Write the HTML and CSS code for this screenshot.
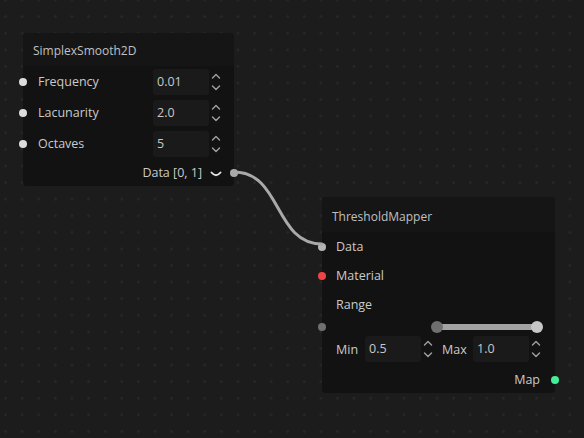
FILE: index.html
```html
<!DOCTYPE html>
<html>
<head>
<meta charset="utf-8">
<link rel="stylesheet" href="styles.css">
</head>
<body>
<div class="canvas">
  <svg class="wires" width="584" height="438" viewBox="0 0 584 438">
    <path d="M234 172 C 282 172, 274 244, 322 244" fill="none" stroke="#a9a9a9" stroke-width="3" stroke-linecap="round"/>
  </svg>

  <div class="node node-simplex">
    <div class="node-header">SimplexSmooth2D</div>
    <div class="row">
      <span class="port port-in port-white"></span>
      <span class="label">Frequency</span>
      <span class="numbox">0.01</span>
      <span class="spin"><svg width="10" height="22" viewBox="0 0 10 22"><path d="M1.5 7 L5 3.5 L8.5 7" /><path d="M1.5 15 L5 18.5 L8.5 15" /></svg></span>
    </div>
    <div class="row">
      <span class="port port-in port-white"></span>
      <span class="label">Lacunarity</span>
      <span class="numbox">2.0</span>
      <span class="spin"><svg width="10" height="22" viewBox="0 0 10 22"><path d="M1.5 7 L5 3.5 L8.5 7" /><path d="M1.5 15 L5 18.5 L8.5 15" /></svg></span>
    </div>
    <div class="row">
      <span class="port port-in port-white"></span>
      <span class="label">Octaves</span>
      <span class="numbox">5</span>
      <span class="spin"><svg width="10" height="22" viewBox="0 0 10 22"><path d="M1.5 7 L5 3.5 L8.5 7" /><path d="M1.5 15 L5 18.5 L8.5 15" /></svg></span>
    </div>
    <div class="row row-out">
      <span class="label label-out">Data [0, 1]</span>
      <span class="outchev"><svg width="12" height="10" viewBox="0 0 12 10"><path d="M1.5 3.5 Q6 9 10.5 3.5" /></svg></span>
      <span class="port port-out port-gray"></span>
    </div>
  </div>

  <div class="node node-threshold">
    <div class="node-header node-header-2">ThresholdMapper</div>
    <div class="row2">
      <span class="port port-in port-light"></span>
      <span class="label">Data</span>
    </div>
    <div class="row2">
      <span class="port port-in port-red"></span>
      <span class="label">Material</span>
    </div>
    <div class="row2">
      <span class="label">Range</span>
    </div>
    <div class="slider-row">
      <span class="port port-in port-dark"></span>
      <div class="slider">
        <span class="track"></span>
        <span class="handle handle-lo"></span>
        <span class="handle handle-hi"></span>
      </div>
    </div>
    <div class="minmax">
      <span class="mm-label">Min</span>
      <span class="numbox">0.5</span>
      <span class="spin"><svg width="10" height="22" viewBox="0 0 10 22"><path d="M1.5 7 L5 3.5 L8.5 7" /><path d="M1.5 15 L5 18.5 L8.5 15" /></svg></span>
      <span class="mm-label mm-max">Max</span>
      <span class="numbox">1.0</span>
      <span class="spin"><svg width="10" height="22" viewBox="0 0 10 22"><path d="M1.5 7 L5 3.5 L8.5 7" /><path d="M1.5 15 L5 18.5 L8.5 15" /></svg></span>
    </div>
    <div class="row2 row2-out">
      <span class="label">Map</span>
      <span class="port port-out port-green"></span>
    </div>
  </div>
</div>
</body>
</html>
```
FILE: styles.css
```css
html, body {
  margin: 0;
  padding: 0;
}
body {
  width: 584px;
  height: 438px;
  overflow: hidden;
  background: #1c1c1c;
  font-family: "Open Sans", "Noto Sans", sans-serif;
  color: #c9c9c9;
}
.canvas {
  position: relative;
  width: 584px;
  height: 438px;
  background-color: #1c1c1c;
  background-image: radial-gradient(circle at center, #272727 0 1.2px, transparent 1.5px);
  background-size: 16.6px 16.6px;
  background-position: -2.7px -8.3px;
}
.wires {
  position: absolute;
  left: 0;
  top: 0;
  z-index: 2;
  pointer-events: none;
}
.node {
  position: absolute;
  background: #121212;
  border-radius: 4px;
  box-sizing: border-box;
  z-index: 1;
}
.node-simplex {
  left: 23px;
  top: 33px;
  width: 211px;
  height: 153px;
}
.node-threshold {
  left: 322px;
  top: 197px;
  width: 233px;
  height: 196px;
}
.node-header {
  height: 33px;
  line-height: 36px;
  padding-left: 10px;
  font-size: 12px;
  color: #c0c0c0;
  background: #151515;
  border-radius: 4px 4px 0 0;
}
.node-header-2 {
  height: 35px;
  line-height: 39px;
}
.row {
  position: relative;
  height: 31px;
  display: flex;
  align-items: center;
  padding: 0 11px 0 15px;
}
.label {
  flex: 1;
  font-size: 12.5px;
  color: #cacaca;
}
.label-out {
  text-align: right;
  padding-right: 7px;
}
.row-out {
  height: 27px;
}
.numbox {
  width: 56px;
  height: 26px;
  box-sizing: border-box;
  padding-left: 4px;
  line-height: 26px;
  background: #1a1a1a;
  border-radius: 3px;
  font-size: 12.5px;
  color: #c8c8c8;
}
.spin {
  width: 14px;
  display: flex;
  justify-content: center;
  align-items: center;
}
.spin svg path, .outchev svg path {
  fill: none;
  stroke: #a0a0a0;
  stroke-width: 1.4;
  stroke-linecap: round;
  stroke-linejoin: round;
}
.outchev {
  width: 14px;
  display: flex;
  justify-content: center;
  align-items: center;
  padding-top: 3px;
}
.outchev svg path {
  stroke: #e6e6e6;
  stroke-width: 1.9;
}
.port {
  position: absolute;
  width: 8px;
  height: 8px;
  border-radius: 50%;
  top: 50%;
  margin-top: -4px;
}
.port-in { left: -4px; }
.port-out { right: -4px; }
.port-white { background: #dcdcdc; }
.port-gray { background: #a9a9a9; }
.port-light { background: #b5b5b5; }
.port-red { background: #f04444; }
.port-dark { background: #707070; }
.port-green { background: #44ee99; }

.row2 {
  position: relative;
  height: 29px;
  display: flex;
  align-items: center;
  padding: 0 12px 0 14px;
}
.row2-out {
  height: 27px;
  margin-top: 4px;
  justify-content: flex-end;
  padding-right: 15px;
}
.row2-out .label {
  flex: none;
}
.slider-row {
  position: relative;
  height: 16px;
  display: flex;
  align-items: center;
  padding: 0 12px 0 109px;
}
.slider {
  position: relative;
  flex: 1;
  height: 12px;
}
.track {
  position: absolute;
  left: 6px;
  right: 6px;
  top: 3px;
  height: 6px;
  border-radius: 3px;
  background: #a3a3a3;
}
.handle {
  position: absolute;
  top: 0;
  width: 12px;
  height: 12px;
  border-radius: 50%;
}
.handle-lo { left: 0; background: #6f6f6f; }
.handle-hi { right: 0; background: #c6c6c6; }
.minmax {
  height: 26px;
  margin-top: 1px;
  display: flex;
  align-items: center;
  padding: 0 12px 0 14px;
}
.mm-label {
  width: 29px;
  font-size: 12.5px;
  color: #cacaca;
}
.mm-max {
  width: 31px;
  margin-left: 7px;
}
```
